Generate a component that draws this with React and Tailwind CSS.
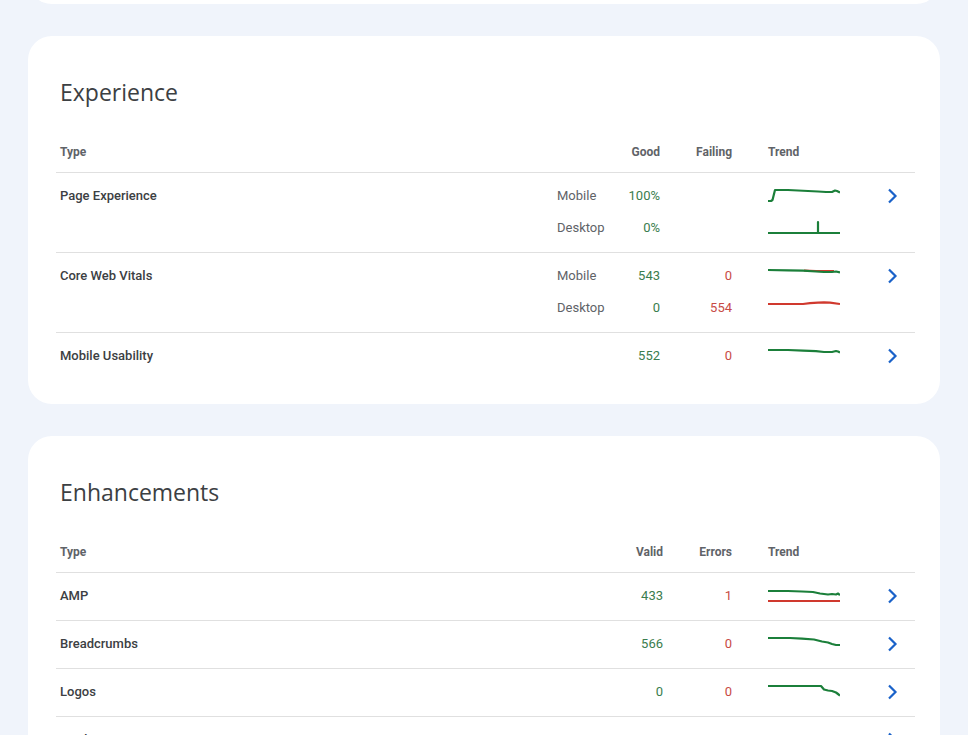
const GREEN = "#1b7f3a";
const RED = "#d0392e";
const GREEN_TEXT = "#3a7d4e";
const RED_TEXT = "#c84b45";

const experience = [
  {
    label: "Page Experience",
    subs: [
      { device: "Mobile", good: "100%", failing: "", lines: [{ c: GREEN, p: "0,15 3,15 4.5,14 7,4 20,4 30,4.5 40,5 50,5.5 58,6 64,6 67,4.5 69,5 72,6.5" }] },
      { device: "Desktop", good: "0%", failing: "", lines: [{ c: GREEN, p: "0,15 50,15 50,4 50,15 72,15" }] },
    ],
  },
  {
    label: "Core Web Vitals",
    subs: [
      {
        device: "Mobile",
        good: "543",
        failing: "0",
        lines: [
          { c: RED, p: "36,4.5 48,5 60,5.2 66,5" },
          { c: GREEN, p: "0,4 20,4.3 35,4.6 48,5.5 56,6 64,6 68,5.5 72,6.5" },
        ],
      },
      {
        device: "Desktop",
        good: "0",
        failing: "554",
        lines: [{ c: RED, p: "0,6 35,6 42,5.2 50,4.6 56,4.3 62,4.6 72,6" }],
      },
    ],
  },
  {
    label: "Mobile Usability",
    subs: [{ device: "", good: "552", failing: "0", lines: [{ c: GREEN, p: "0,4 20,4 35,4.6 48,5.2 56,6 64,6 68,5 70,5.5 72,6.5" }] }],
  },
];

const enhancements = [
  {
    label: "AMP",
    valid: "433",
    errors: "1",
    lines: [
      { c: RED, p: "0,15 72,15" },
      { c: GREEN, p: "0,5 20,5 34,5.5 45,6 52,7.5 60,8.5 64,8 68,8.5 70,7.5 72,9" },
    ],
  },
  { label: "Breadcrumbs", valid: "566", errors: "0", lines: [{ c: GREEN, p: "0,4 22,4 34,4.6 46,5.5 54,7.5 60,8.5 64,10 68,11 72,11" }] },
  { label: "Logos", valid: "0", errors: "0", lines: [{ c: GREEN, p: "0,4 53,4 56,7.5 60,8.5 64,9 68,10.5 70,12 72,13.5" }] },
  { label: "Products", valid: "", errors: "", lines: [] },
];

function Spark({ lines }) {
  return (
    <svg width="72" height="20" viewBox="0 0 72 20" className="block">
      {lines.map((l, i) => (
        <polyline key={i} points={l.p} fill="none" stroke={l.c} strokeWidth="2.2" strokeLinejoin="round" />
      ))}
    </svg>
  );
}

function Chevron() {
  return (
    <svg width="24" height="24" viewBox="0 0 24 24" fill="none" stroke="#1a62c9" strokeWidth="2.2">
      <polyline points="9,5.5 15.5,12 9,18.5" />
    </svg>
  );
}

function Card({ title, children }) {
  return (
    <div className="rounded-[24px] bg-white pt-10 pr-[25px] pb-6 pl-7">
      <h2
        className="h-8 pl-1 text-[23px] leading-8 font-normal text-[#3c4043]"
        style={{ fontFamily: "'Open Sans', Roboto, sans-serif" }}
      >
        {title}
      </h2>
      <div className="mt-6">{children}</div>
    </div>
  );
}

function HeaderRow({ a, b, aw, bw }) {
  return (
    <div className="flex h-[41px] items-center border-b border-[#e0e0e0] text-[12px] font-bold text-[#5f6368]">
      <div className="flex-1 pl-1">Type</div>
      <div className={`${aw} text-right`}>{a}</div>
      <div className={`${bw} pr-9 text-right`}>{b}</div>
      <div className="w-[100px]">Trend</div>
      <div className="w-[47px]" />
    </div>
  );
}

export default function App() {
  return (
    <div
      className="h-[735px] overflow-hidden bg-[#f0f4fb] px-7"
      style={{ fontFamily: "Roboto, 'Liberation Sans', sans-serif" }}
    >
      <div className="-mt-[56px] h-[60px] rounded-[24px] bg-white" />

      <div className="mt-8">
        <Card title="Experience">
          <HeaderRow a="Good" b="Failing" aw="w-[103px]" bw="w-[108px]" />
          {experience.map((row) => (
            <div key={row.label} className="flex border-b border-[#e0e0e0] pt-[7px] pb-2 text-[13px] last:border-b-0">
              <div className="flex h-8 flex-1 items-center pl-1 font-medium text-[#3c4043]">{row.label}</div>
              <div className="flex flex-col">
                {row.subs.map((s, i) => (
                  <div key={i} className="flex h-8 items-center">
                    <div className="w-[60px] text-[#5f6368]">{s.device}</div>
                    <div className="w-[43px] text-right" style={{ color: GREEN_TEXT }}>
                      {s.good}
                    </div>
                    <div className="w-[108px] pr-9 text-right" style={{ color: RED_TEXT }}>
                      {s.failing}
                    </div>
                    <div className="w-[100px]">
                      <Spark lines={s.lines} />
                    </div>
                    <div className="flex w-[47px] justify-center">{i === 0 && <Chevron />}</div>
                  </div>
                ))}
              </div>
            </div>
          ))}
        </Card>
      </div>

      <div className="mt-8">
        <Card title="Enhancements">
          <HeaderRow a="Valid" b="Errors" aw="w-[106px]" bw="w-[105px]" />
          {enhancements.map((row) => (
            <div key={row.label} className="flex h-12 items-center border-b border-[#e0e0e0] pb-px text-[13px]">
              <div className="flex-1 pl-1 font-medium text-[#3c4043]">{row.label}</div>
              <div className="w-[106px] text-right" style={{ color: GREEN_TEXT }}>
                {row.valid}
              </div>
              <div className="w-[105px] pr-9 text-right" style={{ color: RED_TEXT }}>
                {row.errors}
              </div>
              <div className="w-[100px]">
                <Spark lines={row.lines} />
              </div>
              <div className="flex w-[47px] justify-center">
                <Chevron />
              </div>
            </div>
          ))}
        </Card>
      </div>
    </div>
  );
}
